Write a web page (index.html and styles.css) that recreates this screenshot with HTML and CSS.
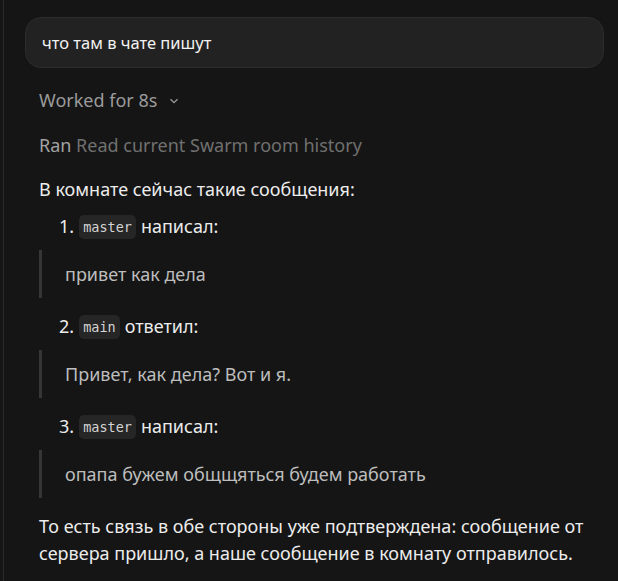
FILE: index.html
```html
<!DOCTYPE html>
<html lang="ru">
<head>
<meta charset="utf-8">
<link rel="stylesheet" href="styles.css">
</head>
<body>
<div class="page">
  <div class="thread">
    <div class="user-msg">что там в чате пишут</div>
    <div class="worked">Worked for 8s
      <svg class="chev" width="10" height="10" viewBox="0 0 10 10"><path d="M1.5 3.2 L5 6.7 L8.5 3.2" fill="none" stroke="#9a9a9a" stroke-width="1.3"/></svg>
    </div>
    <div class="ran"><span class="ran-label">Ran</span> Read current Swarm room history</div>
    <div class="answer">
      <p class="intro">В комнате сейчас такие сообщения:</p>
      <ol class="msgs">
        <li><span class="num">1.</span> <code>master</code> написал:</li>
      </ol>
      <blockquote>привет как дела</blockquote>
      <ol class="msgs">
        <li><span class="num">2.</span> <code>main</code> ответил:</li>
      </ol>
      <blockquote>Привет, как дела? Вот и я.</blockquote>
      <ol class="msgs">
        <li><span class="num">3.</span> <code>master</code> написал:</li>
      </ol>
      <blockquote>опапа бужем общщяться будем работать</blockquote>
      <p class="outro">То есть связь в обе стороны уже подтверждена: сообщение от сервера пришло, а наше сообщение в комнату отправилось.</p>
    </div>
  </div>
</div>
</body>
</html>
```
FILE: styles.css
```css
html, body {
  margin: 0;
  padding: 0;
  background: #151515;
}
body {
  font-family: "Noto Sans", "Open Sans", sans-serif;
  color: #e6e6e6;
  font-size: 18px;
  width: 618px;
  height: 581px;
  overflow: hidden;
}
.page {
  border-left: 1px solid #2b2b2b;
  margin-left: 3px;
  height: 100%;
  box-sizing: border-box;
}
.thread {
  padding: 17px 14px 0 21px;
}
.user-msg {
  background: #222222;
  border: 1px solid #2c2c2c;
  border-radius: 16px;
  height: 51px;
  box-sizing: border-box;
  padding: 0 16px;
  display: flex;
  align-items: center;
  color: #f2f2f2;
  font-size: 16.5px;
}
.worked {
  margin-top: 19px;
  margin-left: 14px;
  color: #9b9b9b;
  line-height: 26px;
  display: flex;
  align-items: center;
  gap: 12px;
}
.chev { margin-top: 1px; }
.ran {
  margin-top: 19px;
  margin-left: 14px;
  color: #707070;
  line-height: 26px;
}
.ran-label { color: #a3a3a3; }
.answer {
  margin-left: 14px;
  margin-top: 18px;
  line-height: 27px;
}
.answer p { margin: 0; }
.intro { color: #ececec; }
.msgs {
  list-style: none;
  margin: 10px 0 0 0;
  padding: 0 0 0 20px;
  color: #ececec;
}
blockquote + .msgs { margin-top: 15px; }
.msgs li { display: flex; align-items: center; gap: 5px; }
code {
  font-family: "DejaVu Sans Mono", "Liberation Mono", monospace;
  font-size: 13.5px;
  background: #262626;
  color: #d4d4d4;
  border-radius: 5px;
  padding: 0 4px;
  line-height: 24px;
}
blockquote {
  margin: 10px 0 0 0;
  border-left: 3px solid #363636;
  padding: 11px 0 10px 23px;
  color: #bdbdbd;
}
.answer .outro { margin-top: 15px; color: #ececec; }
```
